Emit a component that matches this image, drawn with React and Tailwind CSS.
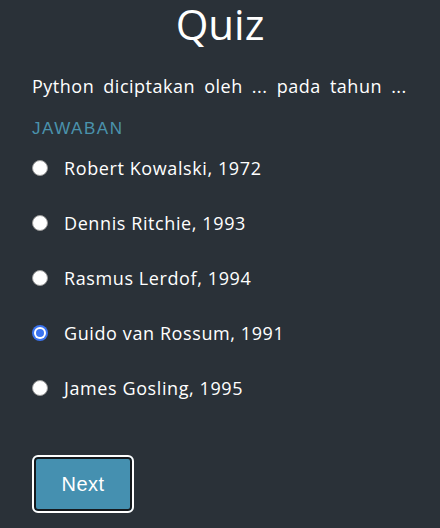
import React, { useState } from 'react';

const options = [
  'Robert Kowalski, 1972',
  'Dennis Ritchie, 1993',
  'Rasmus Lerdof, 1994',
  'Guido van Rossum, 1991',
  'James Gosling, 1995',
];

function Radio({ checked }) {
  if (checked) {
    return (
      <span className="w-4 h-4 rounded-full bg-[#3b74f0] p-[2px] flex">
        <span className="flex-1 rounded-full bg-white p-[2px] flex">
          <span className="flex-1 rounded-full bg-[#3b74f0]" />
        </span>
      </span>
    );
  }
  return <span className="w-4 h-4 rounded-full bg-white border border-[#9a9a9a]" />;
}

export default function App() {
  const [selected, setSelected] = useState(3);

  return (
    <div className="min-h-screen bg-[#2a3138] text-white font-['Open_Sans',sans-serif]">
      <h1 className="text-center text-[42px] leading-[48px] font-medium">Quiz</h1>

      <div className="px-8 pt-[24px]">
        {/* Pertanyaan */}
        <p className="text-[18px] leading-[28px] tracking-[0.5px] [word-spacing:4px]">
          Python diciptakan oleh ... pada tahun ...
        </p>

        <div className="mt-[18px] text-[17px] leading-[22px] tracking-[1.5px] text-[#4a93ad] font-['Liberation_Sans',sans-serif]">
          JAWABAN
        </div>

        <div className="flex flex-col">
          {options.map((opt, i) => (
            <label
              key={opt}
              onClick={() => setSelected(i)}
              className="h-[55px] flex items-center gap-4 cursor-pointer"
            >
              <Radio checked={selected === i} />
              <span className="text-[18px] leading-[28px] tracking-[0.6px]">{opt}</span>
            </label>
          ))}
        </div>

        <button className="mt-[40px] w-[102px] h-[58px] rounded-[6px] border-2 border-white shadow-[inset_0_0_0_2px_#15191d] bg-[#4590b0] text-[20px] tracking-[0.5px] font-['Liberation_Sans',sans-serif]">
          Next
        </button>
      </div>
    </div>
  );
}
